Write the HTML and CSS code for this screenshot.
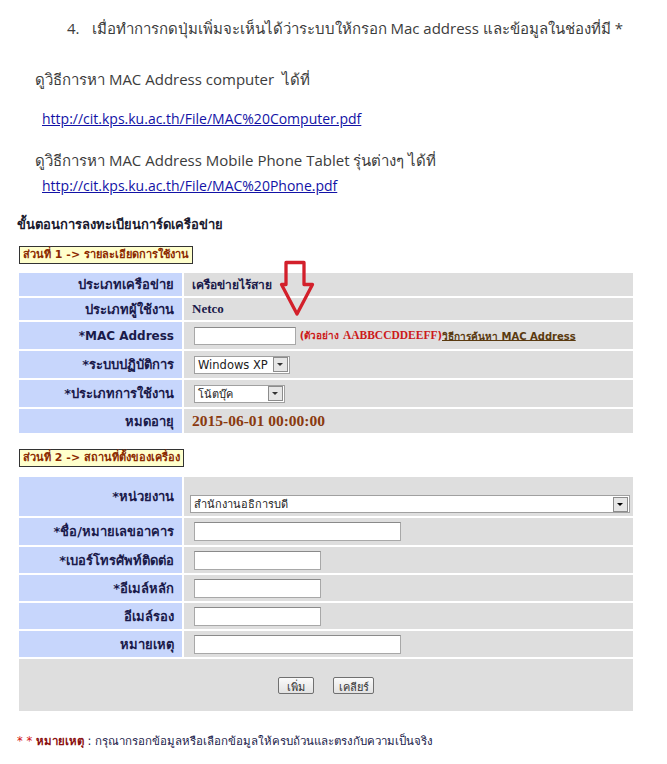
FILE: index.html
```html
<!DOCTYPE html>
<html lang="th">
<head>
    <meta charset="UTF-8">
    <title>ลงทะเบียนการ์ดเครือข่าย</title>
    <link rel="stylesheet" href="styles.css">
</head>
<body>
    <div class="doc">
        <p class="step"><span class="num">4.</span>เมื่อทำการกดปุ่มเพิ่มจะเห็นได้ว่าระบบให้กรอก Mac address และข้อมูลในช่องที่มี *</p>
        <p class="howto">ดูวิธีการหา MAC Address computer &nbsp;ได้ที่</p>
        <p class="link"><a href="#">http://cit.kps.ku.ac.th/File/MAC%20Computer.pdf</a></p>
        <p class="howto second">ดูวิธีการหา MAC Address Mobile Phone Tablet รุ่นต่างๆ ได้ที่</p>
        <p class="link tight"><a href="#">http://cit.kps.ku.ac.th/File/MAC%20Phone.pdf</a></p>
    </div>

    <div class="form">
        <h3 class="title">ขั้นตอนการลงทะเบียนการ์ดเครือข่าย</h3>

        <div class="legend">ส่วนที่ 1 -&gt; รายละเอียดการใช้งาน</div>
        <div class="part">
            <table class="grid">
                <tr class="h23">
                    <th>ประเภทเครือข่าย</th>
                    <td class="strong">เครือข่ายไร้สาย</td>
                </tr>
                <tr class="h22">
                    <th>ประเภทผู้ใช้งาน</th>
                    <td class="serif">Netco</td>
                </tr>
                <tr class="h27">
                    <th class="latin">*MAC Address</th>
                    <td>
                        <input type="text" class="box mac">
                        <span class="hint">(ตัวอย่าง <b>AABBCCDDEEFF</b>)</span><a href="#" class="find">วิธีการค้นหา MAC Address</a>
                    </td>
                </tr>
                <tr class="h27">
                    <th>*ระบบปฏิบัติการ</th>
                    <td><span class="select os"><span class="val">Windows XP</span><span class="btn"></span></span></td>
                </tr>
                <tr class="h27">
                    <th>*ประเภทการใช้งาน</th>
                    <td><span class="select use"><span class="val">โน้ตบุ๊ค</span><span class="btn"></span></span></td>
                </tr>
                <tr class="h24">
                    <th>หมดอายุ</th>
                    <td class="expire">2015-06-01 00:00:00</td>
                </tr>
            </table>
            <svg class="arrow" width="38" height="66" viewBox="0 0 38 66">
                <path d="M7 6.5 H25 V28.5 H33.5 L18 58 L2.5 28.5 H7 Z" fill="none" stroke="#d3202b" stroke-width="3.3" stroke-linejoin="round"/>
            </svg>
        </div>

        <div class="legend second">ส่วนที่ 2 -&gt; สถานที่ตั้งของเครื่อง</div>
        <div class="part">
            <table class="grid">
                <tr class="h39">
                    <th>*หน่วยงาน</th>
                    <td class="low"><span class="select unit"><span class="val">สำนักงานอธิการบดี</span><span class="btn dark"></span></span></td>
                </tr>
                <tr class="h27">
                    <th>*ชื่อ/หมายเลขอาคาร</th>
                    <td><input type="text" class="box long"></td>
                </tr>
                <tr class="h26">
                    <th>*เบอร์โทรศัพท์ติดต่อ</th>
                    <td><input type="text" class="box short"></td>
                </tr>
                <tr class="h26">
                    <th>*อีเมล์หลัก</th>
                    <td><input type="text" class="box short"></td>
                </tr>
                <tr class="h26">
                    <th>อีเมล์รอง</th>
                    <td><input type="text" class="box short"></td>
                </tr>
                <tr class="h26">
                    <th>หมายเหตุ</th>
                    <td><input type="text" class="box long"></td>
                </tr>
                <tr class="h52">
                    <td colspan="2" class="actions">
                        <button class="btn-add">เพิ่ม</button>
                        <button class="btn-clear">เคลียร์</button>
                    </td>
                </tr>
            </table>
        </div>

        <p class="note"><span class="star">* *</span> <b>หมายเหตุ</b> : กรุณากรอกข้อมูลหรือเลือกข้อมูลให้ครบถ้วนและตรงกับความเป็นจริง</p>
    </div>
</body>
</html>
```

FILE: styles.css
```css
body {
    margin: 0;
    background: #fff;
    font-family: "Open Sans", "Noto Sans", sans-serif;
}
.doc {
    padding: 0 0 0 35px;
    color: #3c3c3c;
}
.doc p {
    margin: 0;
    line-height: 20px;
}
.step {
    font-size: 15px;
    padding: 18px 0 0 32px;
    height: 51px;
    white-space: nowrap;
}
.step .num {
    margin-right: 12px;
}
.howto {
    font-size: 15px;
    height: 40px;
}
.howto.second {
    height: 26px;
    margin-top: 5px;
}
.link {
    font-size: 14px;
    padding-left: 7px;
    height: 36px;
}
.link.tight {
    height: 41px;
}
.link a {
    color: #1212a6;
}

.form {
    padding: 0 0 0 17px;
    font-family: "DejaVu Sans", Tahoma, sans-serif;
}
.title {
    font-size: 13px;
    line-height: 16px;
    margin: 0 0 13px 0;
    color: #1a1a2e;
}
.legend {
    width: fit-content;
    margin-left: 2px;
    padding: 1px 3px;
    line-height: 14px;
    border: 1px solid #333;
    background: #ffffcc;
    color: #8b2a00;
    font-size: 11px;
    font-weight: bold;
}
.legend.second {
    margin-top: 14px;
}
.part {
    position: relative;
    margin-top: 7px;
}
.legend.second + .part {
    margin-top: 8px;
}
.grid {
    width: 618px;
    border-spacing: 2px;
    font-size: 13px;
}
.grid th {
    width: 155px;
    text-align: right;
    padding: 0 8px 0 0;
    background: #c7d6fc;
    color: #1a1a4a;
    font-weight: bold;
}
.grid th.latin {
    font-size: 12px;
}
.grid td {
    background: #dedede;
    padding: 0 0 0 8px;
    color: #1a1a4a;
    font-size: 12px;
}
.h22 { height: 22px; }
.h23 { height: 23px; }
.h24 { height: 24px; }
.h26 { height: 26px; }
.h27 { height: 27px; }
.h39 { height: 39px; }
.h52 { height: 52px; }
.grid td.low {
    vertical-align: bottom;
    padding: 0 0 3px 6px;
}
.strong {
    font-weight: bold;
}
.serif {
    font-family: "Liberation Serif", serif;
    font-weight: bold;
    font-size: 13px !important;
}
.grid .expire {
    font-family: "Liberation Serif", serif;
    font-weight: bold;
    font-size: 15.5px;
    color: #8a3a10;
}
.box {
    box-sizing: border-box;
    height: 19px;
    border: 1px solid #a8a8a8;
    border-top-color: #8a8a8a;
    padding: 1px 2px;
    margin: 0 0 0 2px;
    vertical-align: middle;
    background: #fff;
}
.mac { width: 102px; height: 18px; }
.short { width: 127px; }
.long { width: 207px; }
.hint {
    color: #cc1a1a;
    font-size: 10px;
    font-weight: bold;
    vertical-align: middle;
}
.hint b {
    font-family: "Liberation Serif", serif;
    font-size: 11.5px;
}
.find {
    color: #5a3a10;
    font-size: 10px;
    font-weight: bold;
    vertical-align: middle;
}
.select {
    display: inline-flex;
    align-items: center;
    box-sizing: border-box;
    height: 18px;
    margin-left: 2px;
    border: 1px solid #a0a0a0;
    background: #fff;
    font-weight: normal;
    font-size: 12px;
    color: #222;
    vertical-align: middle;
}
.select .val {
    flex: 1;
    padding-left: 3px;
    white-space: nowrap;
    overflow: hidden;
}
.select .btn {
    width: 13px;
    height: 13px;
    margin-right: 1px;
    border: 1px solid #8c8c8c;
    background: #e6e6e6;
    position: relative;
}
.select .btn::after {
    content: "";
    position: absolute;
    left: 3px;
    top: 5px;
    border-left: 3px solid transparent;
    border-right: 3px solid transparent;
    border-top: 3px solid #333;
}
.select .btn.dark::after {
    border-top-color: #000;
}
.os { width: 96px; font-size: 11.5px; }
.use { width: 91px; font-size: 11px; }
.unit { width: 440px; font-size: 11px; margin-left: 0; }
.arrow {
    position: absolute;
    left: 262px;
    top: -15px;
}
.grid .actions {
    text-align: center;
    padding: 0;
}
.actions button {
    height: 17px;
    padding: 0;
    margin: 0 8px;
    font-family: inherit;
    font-size: 11px;
    color: #333;
    border: 1px solid #707070;
    border-radius: 2px;
    background: linear-gradient(#fafafa, #e2e2e2);
}
.actions .btn-add {
    width: 36px;
}
.actions .btn-clear {
    width: 41px;
}
.note {
    margin: 21px 0 0 0;
    font-size: 11.5px;
    line-height: 14px;
    color: #1a1a4a;
}
.note .star {
    color: #d01010;
}
.note b {
    color: #8b1010;
}
```
